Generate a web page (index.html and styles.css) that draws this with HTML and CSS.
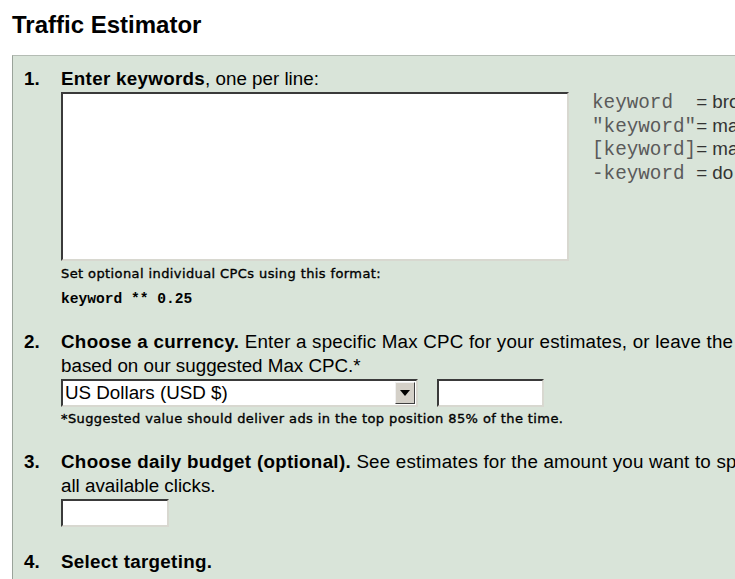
FILE: index.html
```html
<!DOCTYPE html>
<html>
<head>
<meta charset="utf-8">
<link rel="stylesheet" href="styles.css">
</head>
<body>
<h1 class="title">Traffic Estimator</h1>
<div class="panel">
  <div class="step">
    <div class="num">1.</div>
    <div class="body">
      <div class="line"><b>Enter keywords</b>, one per line:</div>
      <div class="kw-row">
        <div class="textarea"></div>
        <div class="legend">
          <div><span class="mono">keyword&nbsp;&nbsp;</span>= broad match</div>
          <div><span class="mono">"keyword"</span>= match phrase</div>
          <div><span class="mono">[keyword]</span>= match exactly</div>
          <div><span class="mono">-keyword&nbsp;</span>= do not match</div>
        </div>
      </div>
      <div class="small note1">Set optional individual CPCs using this format:</div>
      <div class="code">keyword ** 0.25</div>
    </div>
  </div>
  <div class="step s2">
    <div class="num">2.</div>
    <div class="body">
      <div class="line nowrap wide"><b>Choose a currency.</b> Enter a specific Max CPC for your estimates, or leave the field blank to see estimates</div>
      <div class="line">based on our suggested Max CPC.*</div>
      <div class="controls">
        <div class="select"><span class="sel-text">US Dollars (USD $)</span><span class="sel-btn"><span class="tri"></span></span></div>
        <div class="input cpc"></div>
      </div>
      <div class="small note2">*Suggested value should deliver ads in the top position 85% of the time.</div>
    </div>
  </div>
  <div class="step s3">
    <div class="num">3.</div>
    <div class="body">
      <div class="line nowrap wide"><b>Choose daily budget (optional).</b> See estimates for the amount you want to spend per day, or leave blank to see estimates for</div>
      <div class="line">all available clicks.</div>
      <div class="input budget"></div>
    </div>
  </div>
  <div class="step s4">
    <div class="num">4.</div>
    <div class="body">
      <div class="line"><b>Select targeting.</b></div>
    </div>
  </div>
</div>
</body>
</html>
```
FILE: styles.css
```css
html, body {
  margin: 0;
  padding: 0;
  overflow: hidden;
  background: #ffffff;
  width: 735px;
  height: 579px;
}
body {
  font-family: "Liberation Sans", Arial, sans-serif;
  color: #000;
}
.title {
  margin: 0;
  padding: 11px 0 0 12px;
  font-size: 24px;
  line-height: 28px;
  font-weight: bold;
  height: 45px;
  box-sizing: border-box;
}
.panel {
  margin-left: 12px;
  margin-top: 10px;
  width: 1000px;
  background: #d9e4d9;
  border-left: 1px solid #9aa39a;
  border-top: 1px solid #b4bcb4;
  padding: 11px 0 20px 11px;
  font-size: 18.8px;
}
.panel b {
  letter-spacing: 0.3px;
}
.step {
  display: flex;
}
.num {
  width: 37px;
  flex: none;
  font-weight: bold;
  line-height: 24px;
}
.body {
  flex: 1;
}
.line {
  line-height: 24px;
  height: 24px;
}
.nowrap {
  white-space: nowrap;
}
.wide {
  letter-spacing: 0.2px;
}
.kw-row {
  display: flex;
  align-items: flex-start;
  margin-top: 1px;
}
.textarea {
  width: 504px;
  height: 165px;
  background: #fff;
  border-style: solid;
  border-width: 2px;
  border-color: #3a3a3a #d8d8d0 #d8d8d0 #3a3a3a;
  flex: none;
}
.legend {
  margin-left: 23px;
  margin-top: -2px;
  white-space: nowrap;
  color: #333;
  font-size: 18.8px;
}
.legend div {
  line-height: 23.6px;
  height: 23.6px;
}
.mono {
  font-family: "Liberation Mono", "Courier New", monospace;
  font-size: 19.3px;
  color: #5a5a5a;
}
.small {
  font-family: "DejaVu Sans", Verdana, sans-serif;
  font-size: 13px;
  letter-spacing: 0.4px;
  line-height: 16px;
  white-space: nowrap;
  -webkit-text-stroke: 0.35px #000;
}
.note1 {
  margin-top: 5px;
}
.code {
  font-family: "Liberation Mono", "Courier New", monospace;
  font-weight: bold;
  font-size: 14.6px;
  line-height: 16px;
  margin-top: 9px;
}
.s2 {
  margin-top: 23px;
}
.controls {
  display: flex;
  margin-top: 1px;
}
.select {
  width: 357px;
  height: 28px;
  box-sizing: border-box;
  background: #fff;
  border-style: solid;
  border-width: 2px;
  border-color: #3a3a3a #d8d8d0 #d8d8d0 #3a3a3a;
  display: flex;
  align-items: center;
}
.sel-text {
  flex: 1;
  padding-left: 2px;
  font-size: 18.8px;
  line-height: 22px;
}
.sel-btn {
  width: 20px;
  height: 22px;
  margin-right: 1px;
  background: #d4d0c8;
  border-style: solid;
  border-width: 1px;
  border-color: #f0f0f0 #404040 #404040 #f0f0f0;
  box-sizing: border-box;
  display: flex;
  align-items: center;
  justify-content: center;
}
.tri {
  width: 0;
  height: 0;
  border-left: 5px solid transparent;
  border-right: 5px solid transparent;
  border-top: 6px solid #000;
}
.input {
  height: 28px;
  box-sizing: border-box;
  background: #fff;
  border-style: solid;
  border-width: 2px;
  border-color: #3a3a3a #d8d8d0 #d8d8d0 #3a3a3a;
}
.cpc {
  width: 107px;
  margin-left: 19px;
}
.note2 {
  margin-top: 4px;
}
.s3 {
  margin-top: 23px;
}
.budget {
  width: 108px;
  margin-top: 1px;
}
.s4 {
  margin-top: 23px;
}
```
